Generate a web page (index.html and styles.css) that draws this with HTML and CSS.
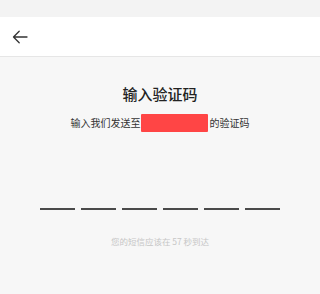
FILE: index.html
```html
<!DOCTYPE html>
<html lang="zh-CN">
<head>
<meta charset="utf-8">
<link rel="stylesheet" href="styles.css">
</head>
<body>
<div class="status"></div>
<header class="topbar">
  <svg class="back" width="16" height="14" viewBox="0 0 16 14" aria-hidden="true">
    <path d="M15 7H1.5M7.2 1.2L1.5 7l5.7 5.8" fill="none" stroke="#333" stroke-width="1.3" stroke-linecap="round" stroke-linejoin="round"/>
  </svg>
</header>
<main class="content">
  <h1 class="title">输入验证码</h1>
  <p class="subtitle">输入我们发送至<span class="masked"></span>的验证码</p>
  <div class="code">
    <span class="slot"></span><span class="slot"></span><span class="slot"></span><span class="slot"></span><span class="slot"></span><span class="slot"></span>
  </div>
  <p class="note">您的短信应该在 57 秒到达</p>
</main>
</body>
</html>
```

FILE: styles.css
```css
html, body {
  margin: 0;
  padding: 0;
}
body {
  width: 320px;
  height: 294px;
  background: #f7f7f7;
  font-family: "Noto Sans CJK SC", "Noto Sans", sans-serif;
  overflow: hidden;
}
.status {
  height: 17px;
  background: #f3f3f3;
}
.topbar {
  height: 39px;
  background: #ffffff;
  border-bottom: 1px solid #e6e6e6;
  display: flex;
  align-items: center;
  padding-left: 12px;
  box-sizing: content-box;
}
.back {
  display: block;
  margin-top: 1px;
}
.content {
  display: flex;
  flex-direction: column;
  align-items: center;
  padding-top: 27px;
}
.title {
  margin: 0;
  font-size: 15px;
  line-height: 20px;
  font-weight: 500;
  color: #222;
}
.subtitle {
  margin: 10px 0 0;
  font-size: 10px;
  line-height: 14px;
  color: #333;
  display: flex;
  align-items: center;
}
.masked {
  display: inline-block;
  width: 67px;
  height: 18px;
  background: #ff4545;
  margin: 0 2px 0 0;
  border-radius: 1px;
}
.code {
  margin-top: 76px;
  display: flex;
  gap: 6px;
}
.slot {
  display: block;
  width: 35px;
  height: 2px;
  background: #4a4a4a;
}
.note {
  margin: 25px 0 0;
  font-size: 8.5px;
  line-height: 12px;
  color: #c6c6c6;
}
```
